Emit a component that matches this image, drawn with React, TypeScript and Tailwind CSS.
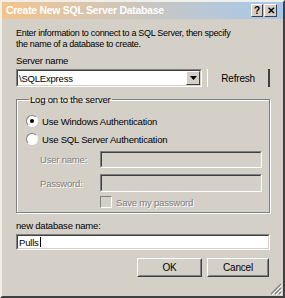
import React from 'react'

const font = { fontFamily: '"Liberation Sans", Arial, sans-serif' }

function Sunken({ className = '', children }: { className?: string; children?: React.ReactNode }) {
  return (
    <div className={`border border-t-[#808080] border-l-[#808080] border-b-white border-r-white ${className}`}>
      <div className="h-full w-full border border-t-[#404040] border-l-[#404040] border-b-[#d4d0c8] border-r-[#d4d0c8]">
        {children}
      </div>
    </div>
  )
}

function Button({ label, className = '' }: { label: string; className?: string }) {
  return (
    <div className={`border border-t-white border-l-white border-b-[#404040] border-r-[#404040] ${className}`}>
      <div className="flex h-full w-full items-center justify-center border border-t-[#d4d0c8] border-l-[#d4d0c8] border-b-[#808080] border-r-[#808080] text-[10px] text-black">
        {label}
      </div>
    </div>
  )
}

function Radio({ checked }: { checked?: boolean }) {
  return (
    <div className="flex h-[12px] w-[12px] items-center justify-center rounded-full border border-t-[#808080] border-l-[#808080] border-b-white border-r-white bg-white">
      {checked && <div className="h-[4px] w-[4px] rounded-full bg-black" />}
    </div>
  )
}

export default function App() {
  return (
    <div
      style={font}
      className="relative flex h-[298px] w-[285px] flex-col overflow-hidden border-2 border-l-[#f0efea] border-t-[#f0efea] border-r-[#404040] border-b-[#404040] bg-[#d4d0c8] text-black"
    >
      {/* title bar */}
      <div className="flex h-[17px] shrink-0 items-center justify-between bg-gradient-to-r from-[#f2c48c] via-[#c9c6c0] to-[#a6c8ee] pl-[4px] pr-[6px]">
        <span className="text-[10.5px] font-bold tracking-[-0.3px] text-white">Create New SQL Server Database</span>
        <div className="flex gap-[1px]">
          <div className="flex h-[13px] w-[12px] items-center justify-center border border-t-white border-l-white border-b-[#404040] border-r-[#404040] bg-[#d4d0c8] text-[10px] font-bold leading-none">?</div>
          <div className="flex h-[13px] w-[13px] items-center justify-center border border-t-white border-l-white border-b-[#404040] border-r-[#404040] bg-[#d4d0c8] text-[10px] font-bold leading-none">✕</div>
        </div>
      </div>

      <div className="flex flex-col pl-[14px] pr-[13px] text-[9.5px] leading-[11px] tracking-[-0.2px]">
        <p className="mt-[9px] text-[9px] tracking-[-0.3px]">
          Enter information to connect to a SQL Server, then specify
          <br />
          the name of a database to create.
        </p>

        <div className="mt-[5px]">Server name</div>

        <div className="mt-[3px] flex items-center">
          <Sunken className="h-[18px] w-[187px] bg-white">
            <div className="flex h-full items-center justify-between">
              <span className="pl-[1px]">\SQLExpress</span>
              <div className="flex h-[14px] w-[14px] items-center justify-center border border-t-white border-l-white border-b-[#404040] border-r-[#404040] bg-[#d4d0c8]">
                <svg width="7" height="4" viewBox="0 0 7 4"><path d="M0 0h7L3.5 4z" fill="#000" /></svg>
              </div>
            </div>
          </Sunken>
          <div className="ml-[5px] flex h-[18px] w-[63px] items-center justify-center border-l border-r-2 border-l-white border-r-[#404040] text-[10px]">
            Refresh
          </div>
        </div>

        <fieldset className="mt-[7px] h-[119px] w-[254px] border border-[#808080] pl-[9px] shadow-[inset_1px_1px_0_#fff,1px_1px_0_#fff]">
          <legend className="ml-[3px] px-[1px] leading-[11px]">Log on to the server</legend>
          <div className="mt-[10px] flex items-center gap-[4px]">
            <Radio checked />
            <span>Use Windows Authentication</span>
          </div>
          <div className="mt-[6px] flex items-center gap-[4px]">
            <Radio />
            <span>Use SQL Server Authentication</span>
          </div>
          <div className="mt-[6px] flex items-center">
            <span className="w-[74px] shrink-0 whitespace-nowrap pl-[14px] text-[#808080] [text-shadow:1px_1px_0_#fff]">User name:</span>
            <Sunken className="h-[17px] w-[162px]" />
          </div>
          <div className="mt-[6px] flex items-center">
            <span className="w-[74px] shrink-0 whitespace-nowrap pl-[14px] text-[#808080] [text-shadow:1px_1px_0_#fff]">Password:</span>
            <Sunken className="h-[18px] w-[162px]" />
          </div>
          <div className="mt-[4px] flex items-center pl-[74px]">
            <div className="h-[12px] w-[12px] border border-t-[#808080] border-l-[#808080] border-b-white border-r-white" />
            <span className="ml-[4px] text-[#808080] [text-shadow:1px_1px_0_#fff]">Save my password</span>
          </div>
        </fieldset>

        <div className="mt-[7px]">new database name:</div>
        <Sunken className="mt-[3px] h-[16px] w-[254px] bg-white">
          <div className="flex h-full items-center pl-[1px]">
            Pulls<span className="ml-[1px] inline-block h-[10px] w-[1px] bg-black" />
          </div>
        </Sunken>

        <div className="mt-[8px] flex justify-end gap-[5px] pr-[1px]">
          <Button label="OK" className="h-[19px] w-[65px]" />
          <Button label="Cancel" className="h-[19px] w-[62px]" />
        </div>
      </div>

      <svg className="absolute bottom-[1px] right-[1px]" width="12" height="12" viewBox="0 0 12 12">
        <path d="M11 1L1 11M11 5L5 11M11 9L9 11" stroke="#808080" strokeWidth="1.2" />
        <path d="M12 2L2 12M12 6L6 12M12 10L10 12" stroke="#fff" strokeWidth="1" />
      </svg>
    </div>
  )
}
